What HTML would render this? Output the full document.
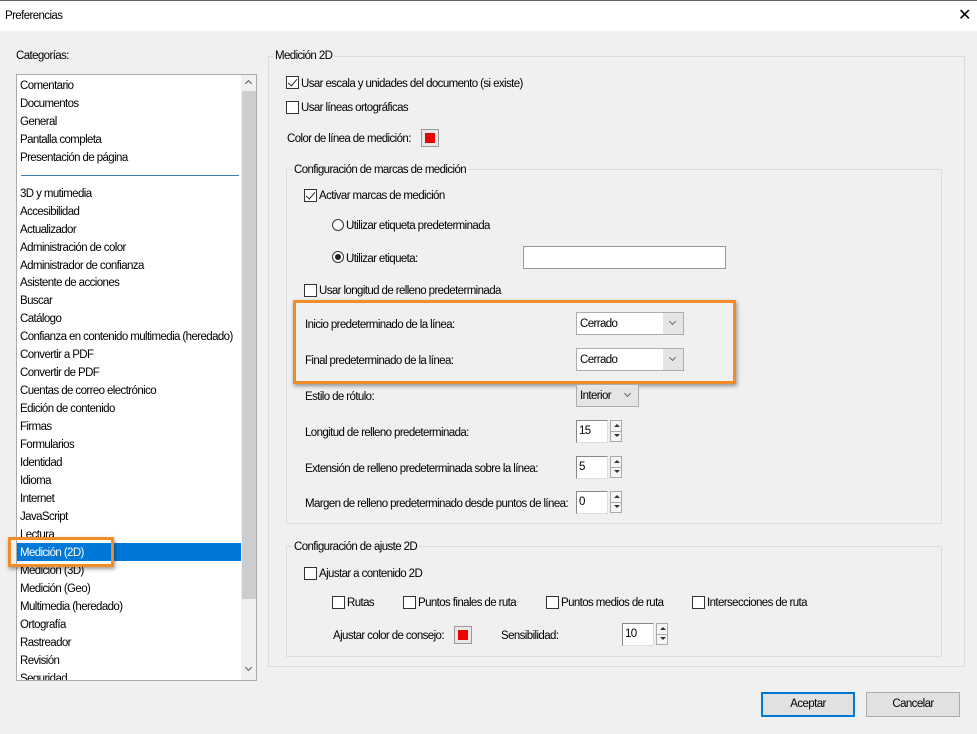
<!DOCTYPE html>
<html><head><meta charset="utf-8"><style>
*{box-sizing:border-box;margin:0;padding:0}
body{width:977px;height:734px;background:#f0f0f0;font-family:"Liberation Sans",sans-serif;font-size:11.5px;letter-spacing:-0.6px;color:#000;position:relative;overflow:hidden}
.a{position:absolute;white-space:nowrap}
.t{position:absolute;line-height:14px;white-space:nowrap}
.cb{position:absolute;width:13px;height:13px;border:1px solid #333;background:#fff}
.cb.c::after{content:"";position:absolute;left:3px;top:0px;width:4px;height:8px;border:solid #222;border-width:0 1.5px 1.5px 0;transform:rotate(40deg)}
.grp{position:absolute;border:1px solid #dcdcdc}
.lg{position:absolute;background:#f0f0f0;padding:0 2px;line-height:14px}
.sel{position:absolute;height:23px;border:1px solid #adadad;background:#fff}
.sel .ar{position:absolute;right:0;top:0;width:20px;height:21px;background:#e5e5e5}
.sel .ar::after{content:"";position:absolute;left:7px;top:6px;width:4px;height:4px;border:solid #666;border-width:0 1px 1px 0;transform:rotate(45deg)}
.sp{position:absolute;width:32px;height:23px;border:1px solid #888;border-right-color:#ddd;border-bottom-color:#ddd;background:#fff;padding:3px 2px;line-height:14px}
.ud{position:absolute;width:12px;height:22px;border:1px solid #aaa;background:#f6f6f6}
.ud::before{content:"";position:absolute;left:3px;top:3px;border:3px solid transparent;border-bottom:3px solid #333;border-top:0}
.ud::after{content:"";position:absolute;left:3px;top:13px;border:3px solid transparent;border-top:3px solid #333;border-bottom:0}
.ud i{position:absolute;left:0;right:0;top:10px;border-top:1px solid #aaa}
.rd{position:absolute;width:12px;height:12px;border:1px solid #333;border-radius:50%;background:#fff}
.btn{position:absolute;height:25px;border:1px solid #adadad;background:#e1e1e1;text-align:center;line-height:23px}
.sw{position:absolute;width:18px;height:18px;border:1px solid #999;background:#e8e8e8}
.sw::after{content:"";position:absolute;left:3px;top:3px;width:10px;height:10px;background:#e00}
</style></head><body>
<div class="a" style="left:0;top:0;width:977px;height:31px;background:#fff;border-top:1px solid #666"></div>
<div class="t" style="left:5px;top:9px">Preferencias</div>
<div class="a" style="left:958px;top:5px;font-size:16px;letter-spacing:0">✕</div>

<div class="t" style="left:16px;top:49px">Categorías:</div>
<div class="a" style="left:16px;top:74px;width:241px;height:607px;background:#fff;border:1px solid #aaa;overflow:hidden">
 <div class="a" style="left:224px;top:0;width:16px;height:605px;background:#f0f0f0"></div>
 <div class="a" style="left:225px;top:16px;width:14px;height:508px;background:#cdcdcd"></div>
 <div class="a" style="left:229px;top:6px;width:5px;height:5px;border:solid #555;border-width:1px 0 0 1px;transform:rotate(45deg)"></div>
 <div class="a" style="left:229px;top:590px;width:5px;height:5px;border:solid #555;border-width:0 1px 1px 0;transform:rotate(45deg)"></div>
 <div class="a" style="left:4px;top:100px;width:218px;border-top:1px solid #3c7fb1"></div>
 <div class="a" style="left:0;top:468px;width:224px;height:18px;background:#0078d7"></div>
</div>
<div class="a" style="left:20px;top:78px;line-height:17.95px">
Comentario<br>Documentos<br>General<br>Pantalla completa<br>Presentación de página<br><br>3D y mutimedia<br>Accesibilidad<br>Actualizador<br>Administración de color<br>Administrador de confianza<br>Asistente de acciones<br>Buscar<br>Catálogo<br>Confianza en contenido multimedia (heredado)<br>Convertir a PDF<br>Convertir de PDF<br>Cuentas de correo electrónico<br>Edición de contenido<br>Firmas<br>Formularios<br>Identidad<br>Idioma<br>Internet<br>JavaScript<br>Lectura<br><span style="color:#fff">Medición (2D)</span><br>Medición (3D)<br>Medición (Geo)<br>Multimedia (heredado)<br>Ortografía<br>Rastreador<br>Revisión<br></div>
<div class="a" style="left:20px;top:672px;height:8px;overflow:hidden;line-height:18px"><div style="margin-top:-2px">Seguridad</div></div>
<div class="a" style="left:8px;top:537px;width:106px;height:30px;border:3px solid #f28c28;box-shadow:1px 2px 4px rgba(0,0,0,.4)"></div>

<div class="grp" style="left:268px;top:56px;width:697px;height:611px"></div>
<div class="lg" style="left:273px;top:49px">Medición 2D</div>
<div class="cb c" style="left:286px;top:76px"></div><div class="t" style="left:301px;top:77px">Usar escala y unidades del documento (si existe)</div>
<div class="cb" style="left:286px;top:101px"></div><div class="t" style="left:301px;top:101px">Usar líneas ortográficas</div>
<div class="t" style="left:287px;top:132px">Color de línea de medición:</div><div class="sw" style="left:421px;top:129px"></div>

<div class="grp" style="left:286px;top:169px;width:656px;height:355px"></div>
<div class="lg" style="left:292px;top:163px">Configuración de marcas de medición</div>
<div class="cb c" style="left:304px;top:189px"></div><div class="t" style="left:319px;top:189px">Activar marcas de medición</div>
<div class="rd" style="left:332px;top:219px"></div><div class="t" style="left:346px;top:219px">Utilizar etiqueta predeterminada</div>
<div class="rd" style="left:332px;top:251px"></div><div class="a" style="left:335px;top:254px;width:6px;height:6px;border-radius:50%;background:#222"></div><div class="t" style="left:346px;top:252px">Utilizar etiqueta:</div>
<div class="a" style="left:523px;top:246px;width:203px;height:23px;background:#fff;border:1px solid #999"></div>
<div class="cb" style="left:304px;top:284px"></div><div class="t" style="left:319px;top:284px">Usar longitud de relleno predeterminada</div>
<div class="t" style="left:305px;top:318px">Inicio predeterminado de la línea:</div>
<div class="sel" style="left:576px;top:312px;width:108px"><span class="a" style="left:3px;top:5px">Cerrado</span><div class="ar"></div></div>
<div class="t" style="left:305px;top:354px">Final predeterminado de la línea:</div>
<div class="sel" style="left:576px;top:348px;width:108px"><span class="a" style="left:3px;top:5px">Cerrado</span><div class="ar"></div></div>
<div class="a" style="left:293px;top:300px;width:443px;height:84px;border:3px solid #f28c28;box-shadow:1px 2px 4px rgba(0,0,0,.4)"></div>
<div class="t" style="left:305px;top:390px">Estilo de rótulo:</div>
<div class="sel" style="left:576px;top:384px;width:63px;background:#e5e5e5"><span class="a" style="left:3px;top:5px">Interior</span><div class="ar"></div></div>
<div class="t" style="left:305px;top:426px">Longitud de relleno predeterminada:</div>
<div class="sp" style="left:576px;top:420px">15</div><div class="ud" style="left:610px;top:420px"><i></i></div>
<div class="t" style="left:305px;top:462px">Extensión de relleno predeterminada sobre la línea:</div>
<div class="sp" style="left:576px;top:456px">5</div><div class="ud" style="left:610px;top:456px"><i></i></div>
<div class="t" style="left:305px;top:497px">Margen de relleno predeterminado desde puntos de línea:</div>
<div class="sp" style="left:576px;top:491px">0</div><div class="ud" style="left:610px;top:491px"><i></i></div>

<div class="grp" style="left:286px;top:546px;width:656px;height:111px"></div>
<div class="lg" style="left:292px;top:540px">Configuración de ajuste 2D</div>
<div class="cb" style="left:304px;top:567px"></div><div class="t" style="left:319px;top:567px">Ajustar a contenido 2D</div>
<div class="cb" style="left:332px;top:596px"></div><div class="t" style="left:347px;top:596px">Rutas</div>
<div class="cb" style="left:403px;top:596px"></div><div class="t" style="left:418px;top:596px">Puntos finales de ruta</div>
<div class="cb" style="left:546px;top:596px"></div><div class="t" style="left:561px;top:596px">Puntos medios de ruta</div>
<div class="cb" style="left:692px;top:596px"></div><div class="t" style="left:707px;top:596px">Intersecciones de ruta</div>
<div class="t" style="left:333px;top:629px">Ajustar color de consejo:</div><div class="sw" style="left:454px;top:626px"></div>
<div class="t" style="left:501px;top:629px">Sensibilidad:</div>
<div class="sp" style="left:622px;top:623px">10</div><div class="ud" style="left:656px;top:623px"><i></i></div>

<div class="btn" style="left:761px;top:692px;width:94px;border:2px solid #0078d7;line-height:21px">Aceptar</div>
<div class="btn" style="left:866px;top:692px;width:94px">Cancelar</div>
</body></html>
